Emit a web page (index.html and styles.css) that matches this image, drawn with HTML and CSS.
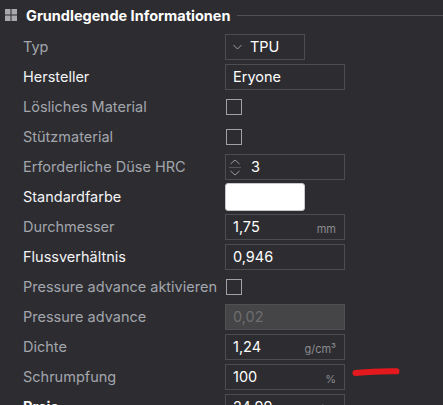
FILE: index.html
```html
<!DOCTYPE html>
<html lang="de">
<head>
<meta charset="utf-8">
<title>Filament – Grundlegende Informationen</title>
<link rel="stylesheet" href="styles.css">
</head>
<body>
<section class="panel">
  <header class="section-head">
    <svg class="section-icon" width="12" height="12" viewBox="0 0 12 12">
      <rect x="0" y="0" width="5.5" height="5.5" fill="#a9a9ad"/>
      <rect x="6.5" y="0" width="5.5" height="5.5" fill="#a9a9ad"/>
      <rect x="0" y="6.5" width="5.5" height="5.5" fill="#a9a9ad"/>
      <rect x="6.5" y="6.5" width="5.5" height="5.5" fill="#a9a9ad"/>
    </svg>
    <span class="section-title">Grundlegende Informationen</span>
    <span class="section-rule"></span>
  </header>

  <div class="rows">
    <div class="row">
      <span class="label">Typ</span>
      <div class="field select">
        <svg class="chev" width="9" height="6" viewBox="0 0 9 6"><path d="M0.5 1 L4.5 5 L8.5 1" fill="none" stroke="#9a9aa0" stroke-width="1"/></svg>
        <span class="value">TPU</span>
      </div>
    </div>
    <div class="row">
      <span class="label strong">Hersteller</span>
      <div class="field text"><span class="value">Eryone</span></div>
    </div>
    <div class="row">
      <span class="label">Lösliches Material</span>
      <span class="check"></span>
    </div>
    <div class="row">
      <span class="label">Stützmaterial</span>
      <span class="check"></span>
    </div>
    <div class="row">
      <span class="label">Erforderliche Düse HRC</span>
      <div class="field text spin">
        <span class="spinner">
          <svg width="10" height="6" viewBox="0 0 10 6"><path d="M0.5 5 L5 1 L9.5 5" fill="none" stroke="#9a9aa0" stroke-width="1"/></svg>
          <span class="spin-rule"></span>
          <svg width="10" height="6" viewBox="0 0 10 6"><path d="M0.5 1 L5 5 L9.5 1" fill="none" stroke="#9a9aa0" stroke-width="1"/></svg>
        </span>
        <span class="value">3</span>
      </div>
    </div>
    <div class="row">
      <span class="label strong">Standardfarbe</span>
      <span class="swatch"></span>
    </div>
    <div class="row">
      <span class="label">Durchmesser</span>
      <div class="field text"><span class="value">1,75</span><span class="unit">mm</span></div>
    </div>
    <div class="row">
      <span class="label strong">Flussverhältnis</span>
      <div class="field text"><span class="value">0,946</span></div>
    </div>
    <div class="row">
      <span class="label">Pressure advance aktivieren</span>
      <span class="check"></span>
    </div>
    <div class="row">
      <span class="label">Pressure advance</span>
      <div class="field text disabled"><span class="value">0,02</span></div>
    </div>
    <div class="row">
      <span class="label">Dichte</span>
      <div class="field text"><span class="value">1,24</span><span class="unit">g/cm³</span></div>
    </div>
    <div class="row">
      <span class="label">Schrumpfung</span>
      <div class="field text"><span class="value">100</span><span class="unit">%</span></div>
      <svg class="mark" width="48" height="10" viewBox="0 0 48 10"><path d="M3.5 6 C12 5.2 28 3.8 44.5 4.3" fill="none" stroke="#e3191e" stroke-width="6" stroke-linecap="round"/></svg>
    </div>
    <div class="row">
      <span class="label strong bold">Preis</span>
      <div class="field text"><span class="value">24,99</span><span class="unit">€/kg</span></div>
    </div>
  </div>
</section>
</body>
</html>
```

FILE: styles.css
```css
html, body {
  margin: 0;
  padding: 0;
  background: #2d2d31;
  overflow: hidden;
}

body {
  font-family: "Inter", "Noto Sans", sans-serif;
  color: #a3a6ad;
  font-size: 14.5px;
}

.panel {
  width: 443px;
  height: 405px;
}

.section-head {
  display: flex;
  align-items: center;
  height: 30px;
  padding-left: 5px;
}

.section-icon {
  flex: none;
  margin-right: 9px;
}

.section-title {
  color: #ffffff;
  font-weight: 700;
  font-size: 14.5px;
  white-space: nowrap;
}

.section-rule {
  flex: 1;
  height: 1px;
  background: #505055;
  margin-left: 6px;
}

.rows {
  padding-top: 2px;
}

.row {
  position: relative;
  display: grid;
  grid-template-columns: 202px auto;
  align-items: center;
  justify-items: start;
  height: 30px;
  padding-left: 23px;
}

.label {
  white-space: nowrap;
  line-height: 20px;
  margin-top: -1px;
}

.label.strong {
  color: #f4f4f6;
}

.label.bold {
  font-weight: 700;
}

.field {
  box-sizing: border-box;
  height: 26px;
  border: 1px solid #4c4c51;
  display: flex;
  align-items: center;
  color: #ffffff;
  font-size: 14.5px;
}

.field .value {
  flex: 1;
  margin-top: -1px;
}

.field.text {
  width: 120px;
  padding: 0 8px 0 7px;
}

.field.select {
  width: 80px;
  padding-left: 7px;
}

.field.select .chev {
  margin-right: 8px;
}

.field .unit {
  color: #8b8b90;
  font-size: 11px;
  padding-top: 3px;
}

.field.disabled {
  background: #454547;
  border-color: #505053;
}

.field.disabled .value {
  color: #6d6d70;
}

.spin {
  padding-left: 2px !important;
}

.spinner {
  display: flex;
  flex-direction: column;
  align-items: center;
  width: 14px;
  margin-right: 9px;
}

.spin-rule {
  display: block;
  width: 12px;
  height: 1px;
  background: #55555a;
  margin: 2px 0;
}

.check {
  box-sizing: border-box;
  width: 16px;
  height: 16px;
  margin-left: 1px;
  border: 1px solid #a2a2a6;
}

.swatch {
  box-sizing: border-box;
  width: 80px;
  height: 28px;
  background: #ffffff;
  border: 1px solid #c8c8cc;
  border-radius: 3px;
}

.mark {
  position: absolute;
  left: 352px;
  top: 5px;
}
```
